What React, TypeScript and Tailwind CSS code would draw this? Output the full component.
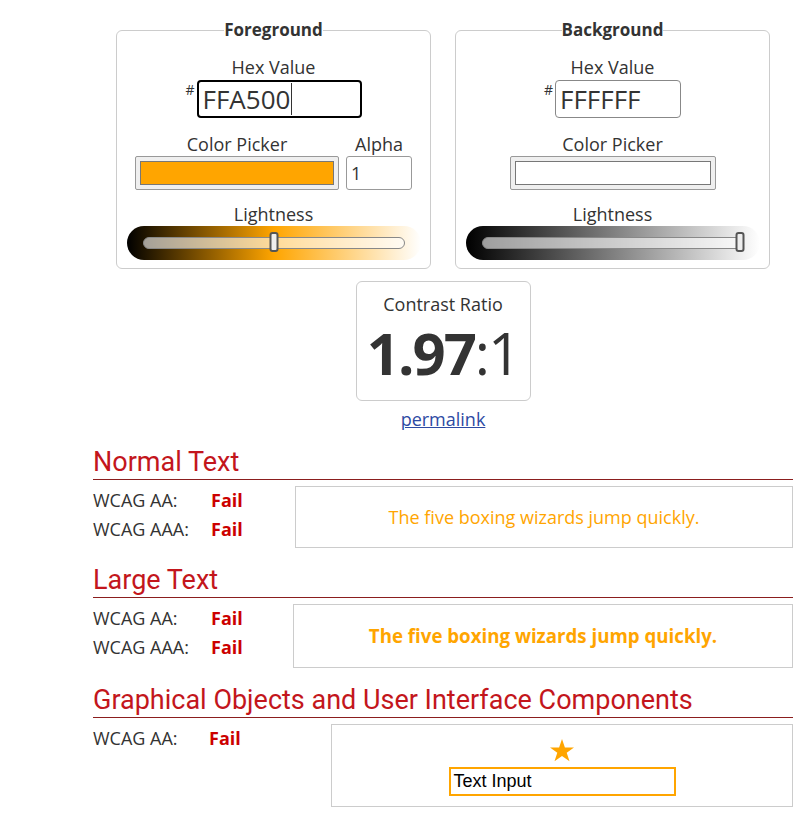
import React from "react";

const sans = "font-['Open_Sans',sans-serif]";

function Slider({ gradient, pos }: { gradient: string; pos: number }) {
  return (
    <div className="h-[34px] w-[294px] rounded-full px-4 flex items-center" style={{ background: gradient }}>
      <div className="relative h-[12px] w-full rounded-full border border-[#888] bg-white/60">
        <div
          className="absolute top-[-6px] h-[20px] w-[9px] rounded-[3px] border-2 border-[#555] bg-[#eee]"
          style={{ left: `${pos}%`, transform: "translateX(-50%)" }}
        />
      </div>
    </div>
  );
}

function Result({ label, value }: { label: string; value: string }) {
  return (
    <div className="flex h-[29px] items-center text-[18px] text-[#333]">
      <span className="w-[118px]">{label}</span>
      <span className="font-bold text-[#c00]">{value}</span>
    </div>
  );
}

function Heading({ children }: { children: React.ReactNode }) {
  return (
    <h2 className="border-b border-[#8b1e1e] font-['Roboto',sans-serif] text-[27px] leading-[34px] text-[#c3161c]">
      {children}
    </h2>
  );
}

export default function App() {
  return (
    <div className={`${sans} min-h-[816px] bg-white text-[#333]`}>
      <div className="ml-[93px] w-[700px] pt-[18px]">
        <div className="flex justify-center gap-[24px]">
          <fieldset className="w-[315px] rounded-md border border-[#ccc] pb-[8px]">
            <legend className="mx-auto text-[17px] font-bold leading-[24px]">Foreground</legend>
            <div className="mt-[13px] text-center text-[18px] leading-[24px]">Hex Value</div>
            <div className="mt-px flex justify-center">
              <span className="mr-[2px] text-[14px] leading-[20px]">#</span>
              <div className="flex h-[38px] w-[165px] items-center rounded-[4px] border-2 border-black pl-[4px] text-[26px]">
                FFA500
                <span className="ml-px h-[32px] w-px bg-[#333]" />
              </div>
            </div>
            <div className="mt-[14px] flex justify-center gap-[7px]">
              <div className="flex flex-col items-center">
                <div className="text-[18px] leading-[24px]">Color Picker</div>
                <div className="h-[34px] w-[204px] rounded-[2px] border border-[#999] bg-[#efefef] p-[4px]">
                  <div className="h-full w-full border border-[#777] bg-[#ffa500]" />
                </div>
              </div>
              <div className="flex flex-col items-center">
                <div className="text-[18px] leading-[24px]">Alpha</div>
                <div className="flex h-[34px] w-[66px] items-center rounded-[3px] border border-[#999] pl-[4px] text-[18px]">1</div>
              </div>
            </div>
            <div className="mt-[12px] text-center text-[18px] leading-[24px]">Lightness</div>
            <div className="flex justify-center">
              <Slider gradient="linear-gradient(to right, #000, #ffa500 50%, #fff)" pos={50} />
            </div>
          </fieldset>

          <fieldset className="w-[315px] rounded-md border border-[#ccc] pb-[8px]">
            <legend className="mx-auto text-[17px] font-bold leading-[24px]">Background</legend>
            <div className="mt-[13px] text-center text-[18px] leading-[24px]">Hex Value</div>
            <div className="mt-px flex justify-center">
              <span className="mr-[2px] text-[14px] leading-[20px]">#</span>
              <div className="flex h-[38px] w-[126px] items-center rounded-[4px] border border-[#888] pl-[4px] text-[26px]">
                FFFFFF
              </div>
            </div>
            <div className="mt-[14px] flex flex-col items-center">
              <div className="text-[18px] leading-[24px]">Color Picker</div>
              <div className="h-[34px] w-[206px] rounded-[2px] border border-[#999] bg-[#efefef] p-[4px]">
                <div className="h-full w-full border border-[#777] bg-white" />
              </div>
            </div>
            <div className="mt-[12px] text-center text-[18px] leading-[24px]">Lightness</div>
            <div className="flex justify-center">
              <Slider gradient="linear-gradient(to right, #000, #fff)" pos={99} />
            </div>
          </fieldset>
        </div>

        <div className="mt-[12px] flex flex-col items-center">
          <div className="flex h-[120px] w-[175px] flex-col items-center rounded-md border border-[#ccc] pt-[10px]">
            <div className="text-[18px] leading-[24px]">Contrast Ratio</div>
            <div className="mt-[2px] text-[58px] leading-[70px] tracking-[-2px]">
              <span className="font-bold">1.97</span>:1
            </div>
          </div>
          <a href="#" className="mt-[6px] text-[18px] leading-[24px] text-[#2d4aa3] underline">
            permalink
          </a>
        </div>

        <div className="mt-[14px]">
          <Heading>Normal Text</Heading>
          <div className="mt-[6px] flex items-start">
            <div className="w-[202px]">
              <Result label="WCAG AA:" value="Fail" />
              <Result label="WCAG AAA:" value="Fail" />
            </div>
            <div className="flex h-[62px] flex-1 items-center justify-center border border-[#ccc] text-[18px] text-[#ffa500]">
              The five boxing wizards jump quickly.
            </div>
          </div>
        </div>

        <div className="mt-[15px]">
          <Heading>Large Text</Heading>
          <div className="mt-[6px] flex items-start">
            <div className="w-[200px]">
              <Result label="WCAG AA:" value="Fail" />
              <Result label="WCAG AAA:" value="Fail" />
            </div>
            <div className="flex h-[64px] flex-1 items-center justify-center border border-[#ccc] text-[18.7px] font-bold text-[#ffa500]">
              The five boxing wizards jump quickly.
            </div>
          </div>
        </div>

        <div className="mt-[15px]">
          <Heading>Graphical Objects and User Interface Components</Heading>
          <div className="mt-[6px] flex items-start">
            <div className="w-[238px]">
              <div className="flex h-[29px] items-center text-[18px] text-[#333]">
                <span className="w-[116px]">WCAG AA:</span>
                <span className="font-bold text-[#c00]">Fail</span>
              </div>
            </div>
            <div className="flex h-[83px] flex-1 flex-col items-center border border-[#ccc] pt-[14px]">
              <svg width="24" height="23" viewBox="0 0 24 23">
                <path d="M12 0l2.9 8.4H24l-7.3 5.3 2.8 8.6L12 17l-7.5 5.3 2.8-8.6L0 8.4h9.1z" fill="#ffa500" />
              </svg>
              <div className="mt-[5px] flex h-[29px] w-[227px] items-center border-2 border-[#ffa500] pl-[3px] font-['Liberation_Sans',sans-serif] text-[18px] text-black">
                Text Input
              </div>
            </div>
          </div>
        </div>
      </div>
    </div>
  );
}
